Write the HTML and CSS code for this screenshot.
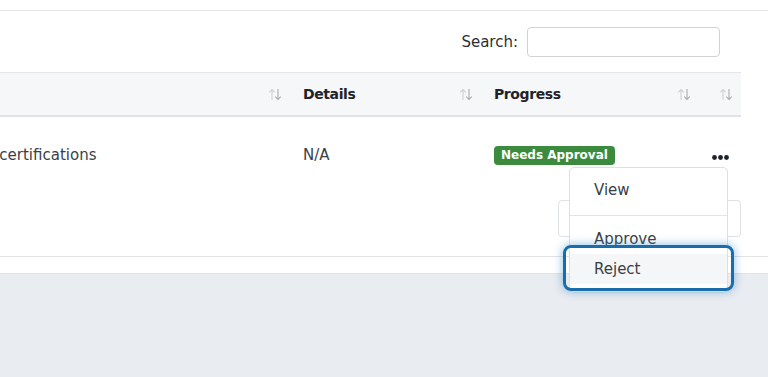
FILE: index.html
```html
<!DOCTYPE html>
<html lang="en">
<head>
    <meta charset="UTF-8">
    <meta name="viewport" content="width=device-width, initial-scale=1.0">
    <title>Requests</title>
    <link rel="stylesheet" href="styles.css">
</head>
<body>
    <div class="page">
        <!-- Tarjeta con la tabla -->
        <div class="card">
            <div class="toolbar">
                <label for="search">Search:</label>
                <input type="search" id="search">
            </div>

            <div class="table-wrap">
                <table class="data-table">
                    <colgroup>
                        <col class="col-name">
                        <col class="col-details">
                        <col class="col-progress">
                        <col class="col-actions">
                    </colgroup>
                    <thead>
                        <tr>
                            <th><div class="th-inner"><span>Task</span><svg class="sort" viewBox="0 0 14 13" width="14" height="13"><path class="up" d="M4 12V1.5M1.2 4.3L4 1.5l2.8 2.8"/><path class="down" d="M10 1v10.5M7.2 8.7L10 11.5l2.8-2.8"/></svg></div></th>
                            <th><div class="th-inner"><span>Details</span><svg class="sort" viewBox="0 0 14 13" width="14" height="13"><path class="up" d="M4 12V1.5M1.2 4.3L4 1.5l2.8 2.8"/><path class="down" d="M10 1v10.5M7.2 8.7L10 11.5l2.8-2.8"/></svg></div></th>
                            <th><div class="th-inner"><span>Progress</span><svg class="sort" viewBox="0 0 14 13" width="14" height="13"><path class="up" d="M4 12V1.5M1.2 4.3L4 1.5l2.8 2.8"/><path class="down" d="M10 1v10.5M7.2 8.7L10 11.5l2.8-2.8"/></svg></div></th>
                            <th><div class="th-inner end"><svg class="sort" viewBox="0 0 14 13" width="14" height="13"><path class="up" d="M4 12V1.5M1.2 4.3L4 1.5l2.8 2.8"/><path class="down" d="M10 1v10.5M7.2 8.7L10 11.5l2.8-2.8"/></svg></div></th>
                        </tr>
                    </thead>
                    <tbody>
                        <tr>
                            <td>Upload certifications</td>
                            <td>N/A</td>
                            <td><span class="badge">Needs Approval</span></td>
                            <td class="actions">
                                <button class="dots" aria-label="Actions">
                                    <svg viewBox="0 0 17 5" width="17" height="5"><circle cx="2.5" cy="2.5" r="2.4"/><circle cx="8.5" cy="2.5" r="2.4"/><circle cx="14.5" cy="2.5" r="2.4"/></svg>
                                </button>
                                <!-- Menú desplegable -->
                                <ul class="menu">
                                    <li class="menu-item">View</li>
                                    <li class="menu-divider"></li>
                                    <li class="menu-item">Approve</li>
                                    <li class="menu-item focused">Reject</li>
                                </ul>
                            </td>
                        </tr>
                    </tbody>
                </table>
            </div>

            <div class="pager">
                <div class="pager-box">
                    <span>Previous</span>
                    <span>1</span>
                    <span>Next</span>
                </div>
            </div>
        </div>

        <div class="footer"></div>
    </div>
</body>
</html>
```

FILE: styles.css
```css
/* Estilos básicos */
body {
    font-family: "DejaVu Sans", sans-serif;
    margin: 0;
    padding: 0;
    color: #3a3f46;
    background: #ffffff;
}

.page {
    padding-top: 10px;
    min-height: 367px;
    display: flex;
    flex-direction: column;
}

/* Tarjeta */
.card {
    border-top: 1px solid #e3e5e8;
    border-bottom: 1px solid #e1e3e6;
    padding-bottom: 19px;
}

.toolbar {
    display: flex;
    align-items: center;
    justify-content: flex-end;
    gap: 9px;
    padding: 16px 48px 15px 0;
    font-size: 15px;
    color: #2b2f34;
}

.toolbar input {
    width: 193px;
    height: 30px;
    box-sizing: border-box;
    border: 1px solid #cfd3d8;
    border-radius: 4px;
    margin: 0;
}

/* Tabla */
.table-wrap {
    padding-right: 27px;
    overflow-x: clip;
    overflow-y: visible;
}

.data-table {
    table-layout: fixed;
    border-collapse: collapse;
    width: 812px;
    margin-left: -71px;
    font-size: 15px;
}

.col-name { width: 361px; }
.col-details { width: 191px; }
.col-progress { width: 218px; }
.col-actions { width: 42px; }

th {
    background: #f6f7f9;
    border-top: 1px solid #e4e6e9;
    border-bottom: 2px solid #e0e2e7;
    height: 42px;
    padding: 0 8px 0 13px;
    text-align: left;
    font-weight: bold;
    font-size: 14px;
    letter-spacing: -0.4px;
    color: #1f2328;
}

.th-inner {
    display: flex;
    align-items: center;
    justify-content: space-between;
}

.th-inner.end {
    justify-content: flex-end;
}

.sort {
    fill: none;
    stroke-width: 1.1;
}

.sort .up { stroke: #cdd0d4; }
.sort .down { stroke: #a9adb2; }

td {
    height: 76px;
    padding: 0 13px;
    vertical-align: middle;
    white-space: nowrap;
}

.badge {
    display: inline-block;
    background: #3b8a3e;
    color: #ffffff;
    font-weight: bold;
    font-size: 12px;
    line-height: 19px;
    padding: 0 7px;
    border-radius: 4px;
}

.actions {
    position: relative;
}

.dots {
    border: none;
    background: none;
    padding: 0;
    display: block;
    fill: #1f2329;
    cursor: pointer;
}

/* Menú */
.menu {
    position: absolute;
    top: 50px;
    right: 13px;
    width: 157px;
    margin: 0;
    padding: 7px 0 8px;
    list-style: none;
    background: #ffffff;
    border: 1px solid #dcdfe3;
    border-radius: 5px;
    z-index: 2;
}

.menu-item {
    height: 30px;
    line-height: 30px;
    padding: 0 24px;
    font-size: 15px;
    color: #3a3f46;
}

.menu-divider {
    height: 1px;
    background: #e2e4e7;
    margin: 10px 0 8px;
}

.menu-item.focused {
    position: relative;
    background: #f5f6f8;
}

.menu-item.focused::after {
    content: "";
    position: absolute;
    top: -9px;
    right: -7px;
    bottom: -7px;
    left: -7px;
    border: 3px solid #1a6dab;
    border-radius: 8px;
    box-shadow: 0 0 9px 1px rgba(40, 130, 200, 0.45);
}

/* Paginación */
.pager {
    display: flex;
    justify-content: flex-end;
    padding: 7px 27px 0 0;
}

.pager-box {
    width: 183px;
    height: 37px;
    box-sizing: border-box;
    border: 1px solid #dee1e5;
    border-radius: 4px;
    display: flex;
    align-items: center;
    justify-content: center;
    gap: 12px;
    font-size: 13px;
    color: #6b7178;
}

.footer {
    margin-top: 16px;
    flex: 1;
    background: #e9ecf1;
    border-top: 1px solid #dfe2e6;
}
```
